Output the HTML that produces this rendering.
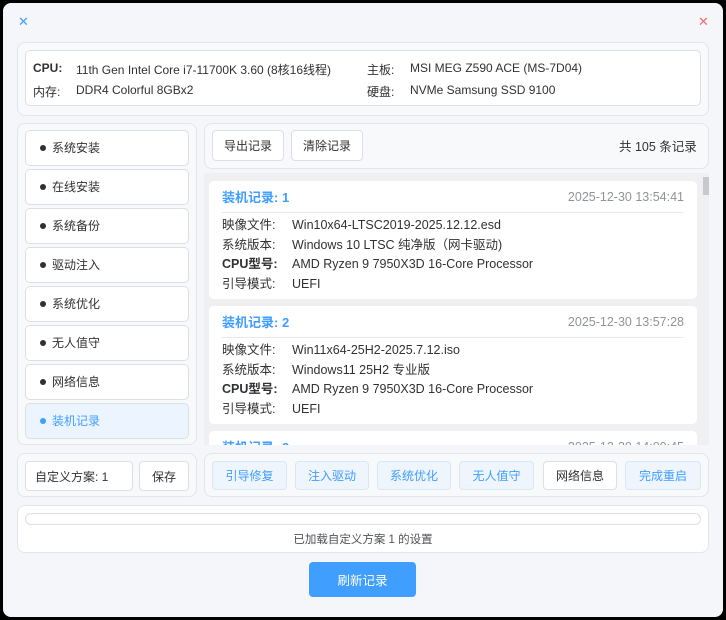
<!DOCTYPE html>
<html><head><meta charset="utf-8"><style>
*{box-sizing:border-box;margin:0;padding:0}
body{width:726px;height:620px;background:#000;font-family:"Liberation Sans","Noto Sans CJK SC",sans-serif;font-size:12px;color:#303133;position:relative;overflow:hidden}
.win{position:absolute;left:3px;top:3px;width:720px;height:614px;background:#f5f6fa;border-radius:8px}
.a{position:absolute}
.panel{position:absolute;background:#f8f9fb;border:1px solid #e2e5eb;border-radius:8px}
.box{position:absolute;background:#fff;border:1px solid #dcdfe6;border-radius:5px}
.btn{position:absolute;background:#fff;border:1px solid #dcdfe6;border-radius:4px;display:flex;align-items:center;justify-content:center;font-size:12px;color:#303133}
.bb{background:#eef5fd;color:#409eff;border-color:#d9e6f4}
.item{position:absolute;left:25px;width:164px;height:36px;background:#fff;border:1px solid #dcdfe6;border-radius:5px;padding-left:14px;line-height:34px;font-size:12px}
.item:before{content:"";display:inline-block;width:6px;height:6px;border-radius:50%;background:#303133;margin-right:6px;vertical-align:1px}
.sel{background:#ecf5ff;color:#409eff}.sel:before{background:#409eff}
.card{position:absolute;left:209px;width:488px;height:118px;background:#fff;border-radius:5px;padding:0 13px}
.card .h{height:32px;border-bottom:1px solid #e8eaf0;display:flex;justify-content:space-between;align-items:center;padding-top:0}
.card .t{color:#409eff;font-weight:bold;font-size:13px}
.card .d{color:#909399;font-size:12.5px}
.row{height:19.5px;line-height:19.5px;font-size:12.5px;display:flex}
.row b{font-weight:normal;width:70px;color:#303133}
</style></head><body>
<div class="win"></div>
<div class="a" style="left:18px;top:14px;color:#409eff;font-size:13px">✕</div>
<div class="a" style="left:698px;top:14px;color:#f56c6c;font-size:13px">✕</div>

<div class="panel" style="left:17px;top:42px;width:692px;height:74px"></div>
<div class="box" style="left:25px;top:50px;width:676px;height:56px"></div>
<div class="a" style="left:33px;top:61px;font-weight:bold">CPU:</div>
<div class="a" style="left:76px;top:61px">11th Gen Intel Core i7-11700K 3.60 (8核16线程)</div>
<div class="a" style="left:33px;top:83px">内存:</div>
<div class="a" style="left:76px;top:83px">DDR4 Colorful 8GBx2</div>
<div class="a" style="left:367px;top:61px">主板:</div>
<div class="a" style="left:410px;top:61px">MSI MEG Z590 ACE (MS-7D04)</div>
<div class="a" style="left:367px;top:83px">硬盘:</div>
<div class="a" style="left:410px;top:83px">NVMe Samsung SSD 9100</div>

<div class="panel" style="left:17px;top:123px;width:180px;height:322px"></div>
<div class="item" style="top:130px">系统安装</div>
<div class="item" style="top:169px">在线安装</div>
<div class="item" style="top:208px">系统备份</div>
<div class="item" style="top:247px">驱动注入</div>
<div class="item" style="top:286px">系统优化</div>
<div class="item" style="top:325px">无人值守</div>
<div class="item" style="top:364px">网络信息</div>
<div class="item sel" style="top:403px">装机记录</div>

<div class="panel" style="left:204px;top:123px;width:505px;height:46px"></div>
<div class="btn" style="left:212px;top:130px;width:72px;height:31px">导出记录</div>
<div class="btn" style="left:291px;top:130px;width:72px;height:31px">清除记录</div>
<div class="a" style="left:619px;top:136px;font-size:12.5px">共 105 条记录</div>

<div class="a" style="left:204px;top:173px;width:505px;height:272px;background:#f0f0f2;overflow:hidden">
<div class="a" style="left:499px;top:4px;width:6px;height:18px;background:#c8c9cc"></div>
</div>
<div class="a" style="left:204px;top:173px;width:499px;height:272px;overflow:hidden">
<div class="card" style="left:5px;top:8px">
<div class="h"><span class="t">装机记录: 1</span><span class="d">2025-12-30 13:54:41</span></div>
<div style="padding-top:3px">
<div class="row"><b>映像文件:</b>Win10x64-LTSC2019-2025.12.12.esd</div>
<div class="row"><b>系统版本:</b>Windows 10 LTSC 纯净版（网卡驱动)</div>
<div class="row"><b style="font-weight:bold">CPU型号:</b>AMD Ryzen 9 7950X3D 16-Core Processor</div>
<div class="row"><b>引导模式:</b>UEFI</div></div></div>
<div class="card" style="left:5px;top:133px">
<div class="h"><span class="t">装机记录: 2</span><span class="d">2025-12-30 13:57:28</span></div>
<div style="padding-top:3px">
<div class="row"><b>映像文件:</b>Win11x64-25H2-2025.7.12.iso</div>
<div class="row"><b>系统版本:</b>Windows11 25H2 专业版</div>
<div class="row"><b style="font-weight:bold">CPU型号:</b>AMD Ryzen 9 7950X3D 16-Core Processor</div>
<div class="row"><b>引导模式:</b>UEFI</div></div></div>
<div class="card" style="left:5px;top:258px">
<div class="h"><span class="t">装机记录: 3</span><span class="d">2025-12-30 14:00:45</span></div></div>
</div>

<div class="panel" style="left:17px;top:453px;width:180px;height:44px"></div>
<div class="btn" style="left:25px;top:461px;width:108px;height:30px;justify-content:flex-start;padding-left:9px">自定义方案: 1</div>
<div class="btn" style="left:139px;top:461px;width:50px;height:30px">保存</div>

<div class="panel" style="left:204px;top:453px;width:505px;height:44px"></div>
<div class="btn bb" style="left:212px;top:461px;width:75px;height:29px">引导修复</div>
<div class="btn bb" style="left:295px;top:461px;width:74px;height:29px">注入驱动</div>
<div class="btn bb" style="left:377px;top:461px;width:74px;height:29px">系统优化</div>
<div class="btn bb" style="left:459px;top:461px;width:75px;height:29px">无人值守</div>
<div class="btn" style="left:543px;top:461px;width:74px;height:29px">网络信息</div>
<div class="btn bb" style="left:625px;top:461px;width:76px;height:29px">完成重启</div>

<div class="panel" style="left:17px;top:505px;width:692px;height:48px;background:#fff"></div>
<div class="a" style="left:25px;top:513px;width:676px;height:12px;border:1px solid #dcdfe6;border-radius:6px;background:#fff"></div>
<div class="a" style="left:17px;top:531px;width:692px;text-align:center;font-size:11.5px;color:#505255">已加载自定义方案 1 的设置</div>

<div class="btn" style="left:309px;top:562px;width:107px;height:35px;background:#409eff;border-color:#409eff;color:#fff;font-size:12.5px">刷新记录</div>
</body></html>
